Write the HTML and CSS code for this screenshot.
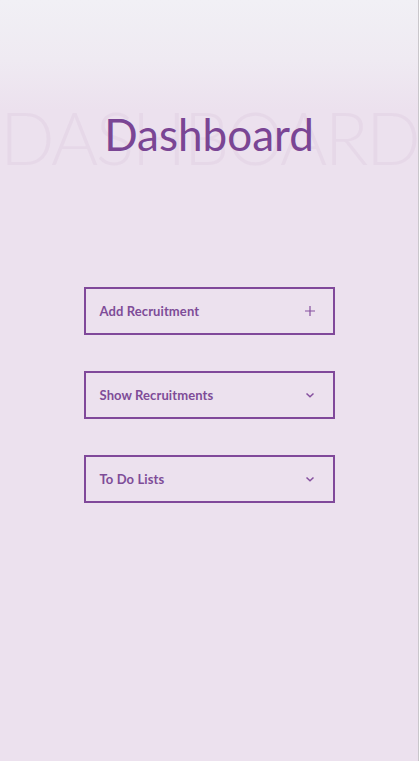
FILE: index.html
```html
<!DOCTYPE html>
<html>
<head>
<meta charset="utf-8">
<link rel="stylesheet" href="styles.css">
</head>
<body>
<div class="page">
  <header class="hero">
    <div class="ghost">DASHBOARD</div>
    <h1 class="title">Dashboard</h1>
  </header>
  <main class="menu">
    <button class="item"><span>Add Recruitment</span>
      <svg class="icon" width="12" height="12" viewBox="0 0 12 12"><path d="M6 1v10M1 6h10" stroke="currentColor" stroke-width="1.2" fill="none"/></svg>
    </button>
    <button class="item"><span>Show Recruitments</span>
      <svg class="icon" width="12" height="12" viewBox="0 0 12 12"><path d="M2.5 4.5L6 7.8 9.5 4.5" stroke="currentColor" stroke-width="1.5" fill="none"/></svg>
    </button>
    <button class="item"><span>To Do Lists</span>
      <svg class="icon" width="12" height="12" viewBox="0 0 12 12"><path d="M2.5 4.5L6 7.8 9.5 4.5" stroke="currentColor" stroke-width="1.5" fill="none"/></svg>
    </button>
  </main>
</div>
</body>
</html>
```

FILE: styles.css
```css
html, body {
  margin: 0;
  padding: 0;
  height: 100%;
}
body {
  font-family: "Lato", "Noto Sans", sans-serif;
  background: #ece1ee;
  overflow: hidden;
}
.page {
  height: 761px;
  border-right: 1px solid #c9c7cb;
  box-sizing: border-box;
  background: linear-gradient(to bottom, #f1f0f5 0px, #efeaf2 60px, #ece1ee 110px, #ece1ee 100%);
}
.hero {
  position: relative;
  height: 190px;
  display: flex;
  justify-content: center;
  padding-top: 112px;
  box-sizing: border-box;
}
.ghost {
  position: absolute;
  left: 0;
  right: 0;
  top: 101px;
  text-align: center;
  font-size: 72px;
  font-weight: 300;
  letter-spacing: -2.5px;
  color: rgba(200, 170, 200, 0.15);
  white-space: nowrap;
  line-height: 1;
}
.title {
  position: relative;
  margin: 0;
  font-size: 44px;
  font-weight: 400;
  color: #7a4594;
  line-height: 1;
}
.menu {
  display: flex;
  flex-direction: column;
  align-items: center;
  gap: 36px;
  padding-top: 97px;
}
.item {
  width: 251px;
  height: 48px;
  box-sizing: border-box;
  border: 2px solid #80489a;
  background: transparent;
  display: flex;
  align-items: center;
  justify-content: space-between;
  padding: 0 17px 0 14px;
  font-family: "Lato", "Noto Sans", sans-serif;
  font-size: 13px;
  font-weight: 700;
  color: #7e4c98;
  letter-spacing: 0.1px;
}
.icon {
  color: #86509f;
}
```
